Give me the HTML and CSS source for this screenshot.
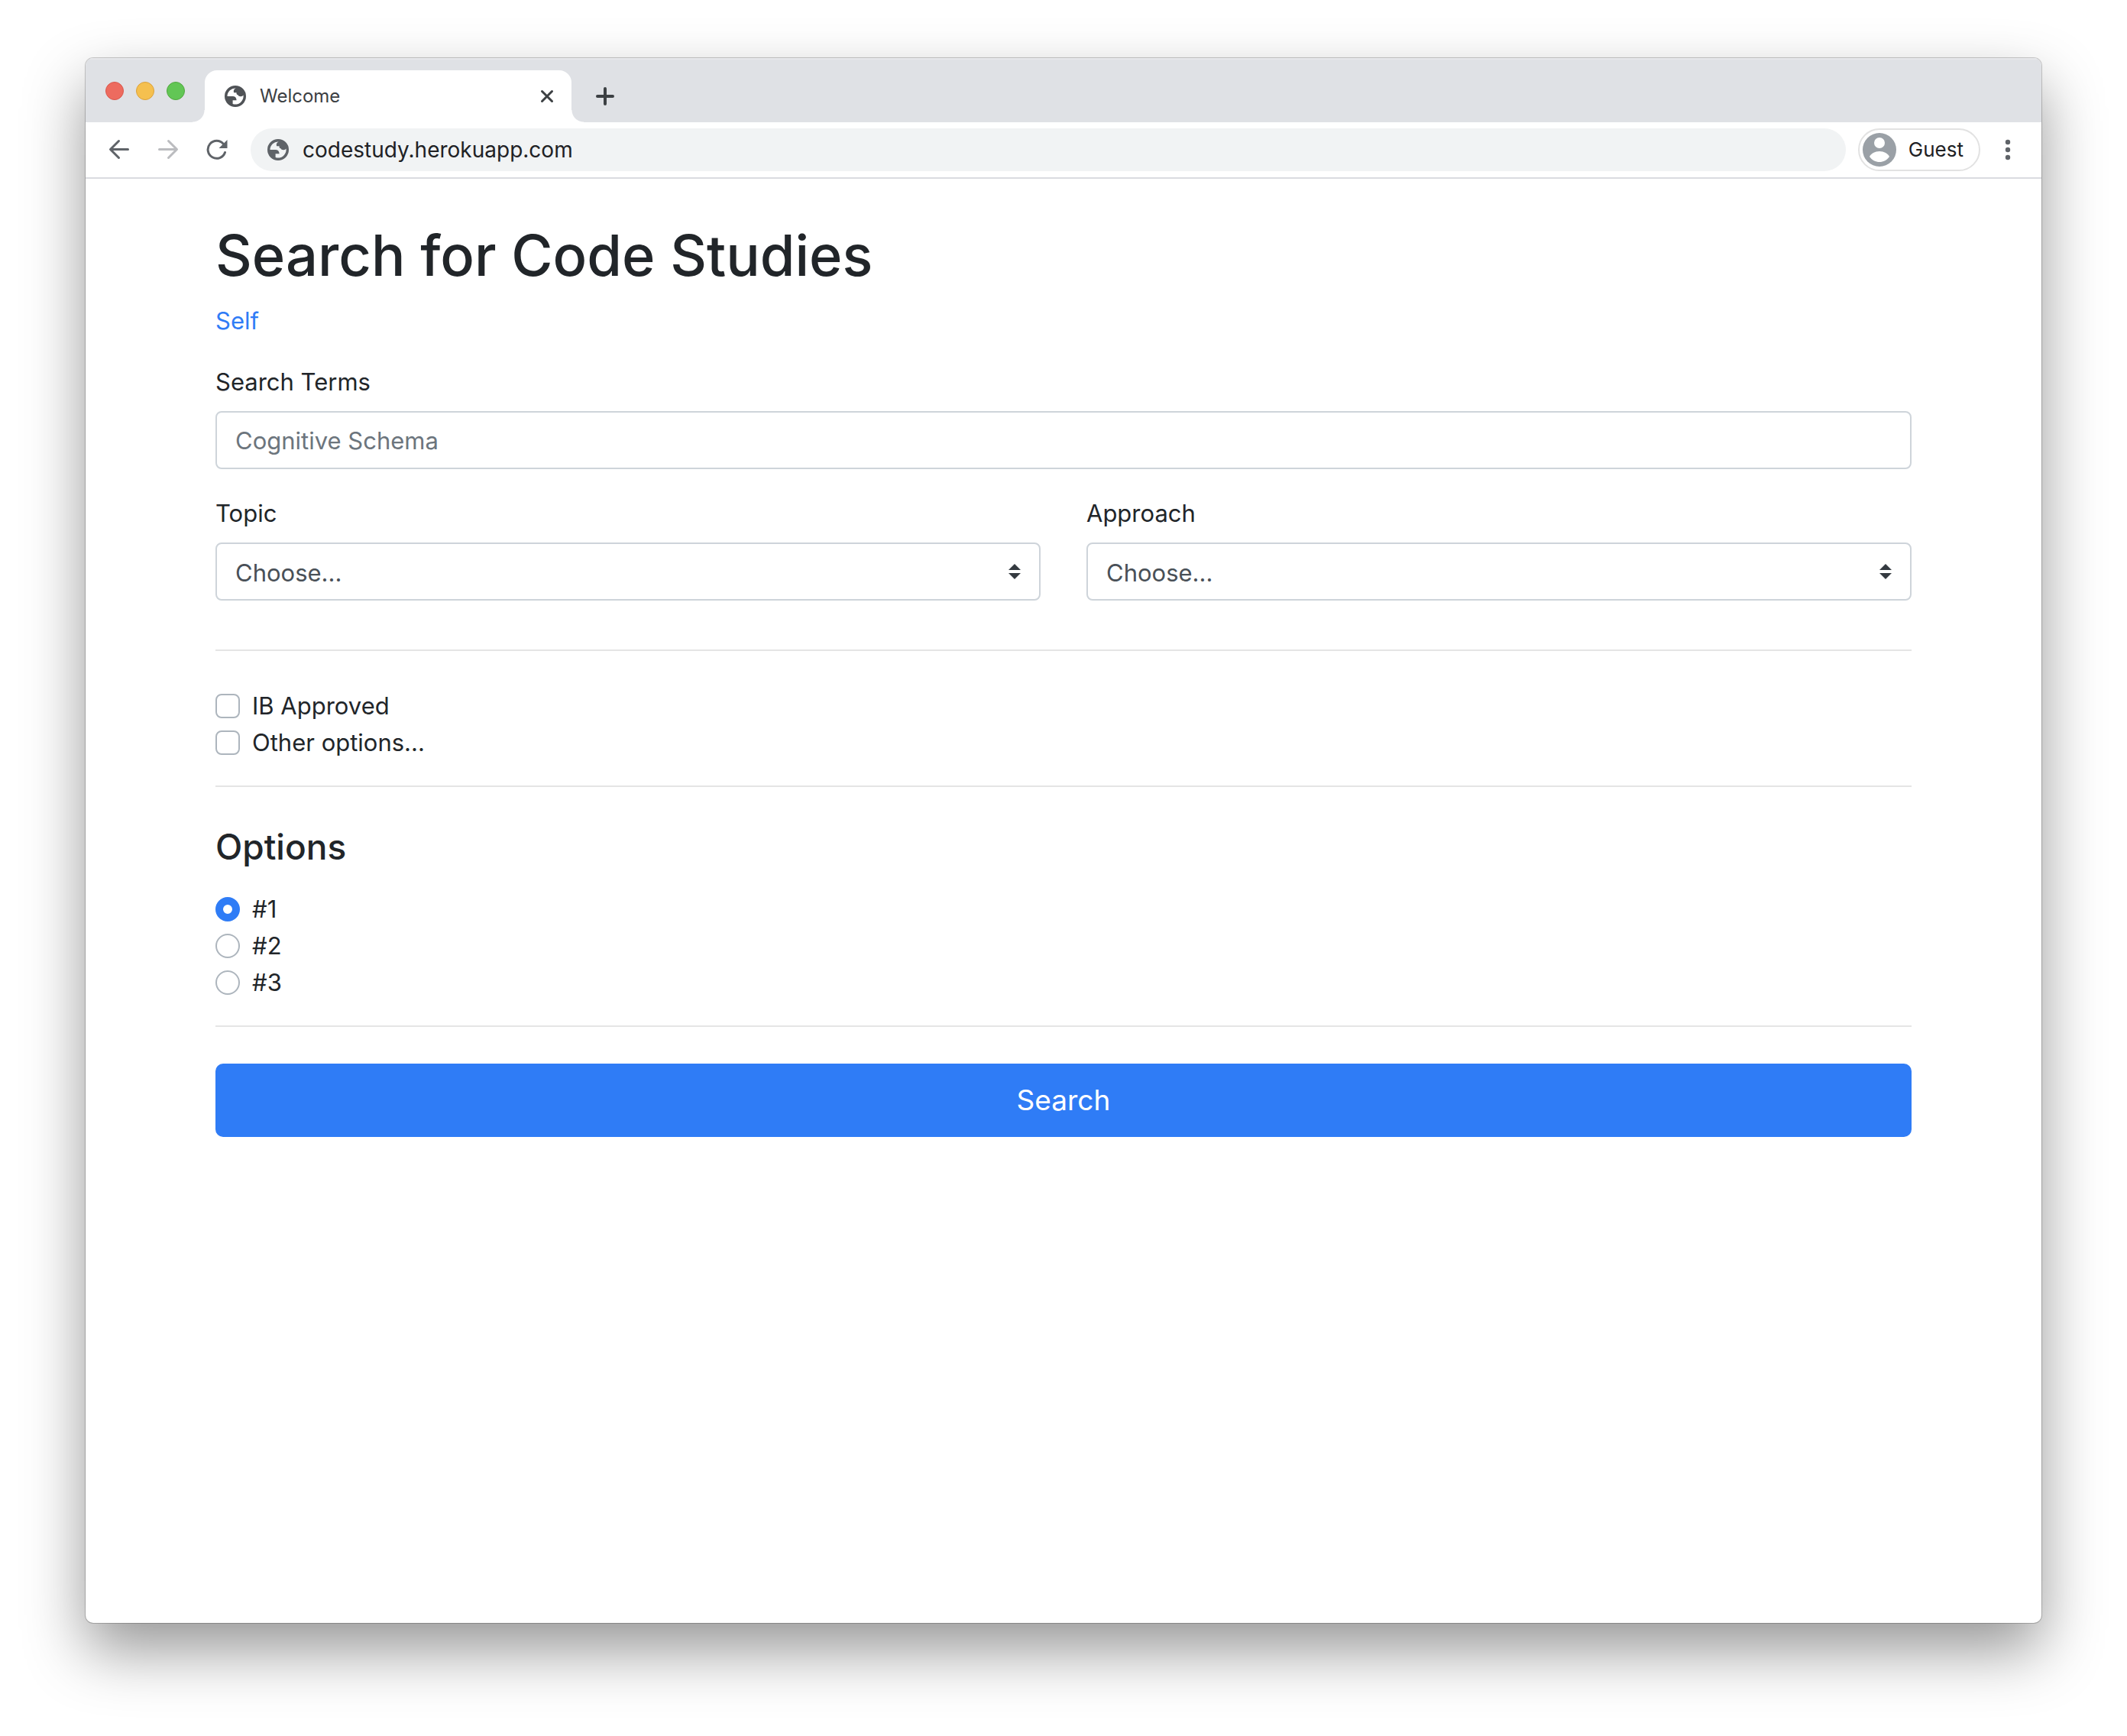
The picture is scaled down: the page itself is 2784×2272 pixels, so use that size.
FILE: index.html
```html
<!DOCTYPE html>
<html lang="en">
<head>
<meta charset="utf-8">
<meta name="viewport" content="width=device-width, initial-scale=1">
<title>Welcome</title>
<link rel="stylesheet" href="styles.css">
</head>
<body>
<svg class="sprite" aria-hidden="true">
  <symbol id="globe" viewBox="0 0 28 28">
    <path fill="currentColor" fill-rule="evenodd" d="M14 0a14 14 0 1 0 0 28a14 14 0 0 0 0-28zM14.8 3.6A10.5 10.5 0 0 0 3.5 14H10.5C13.6 14 15.6 15.8 15.6 19.3H10.6V24A10.6 10.6 0 0 0 24.5 12.6C23.6 14 22.4 14.3 21 14.2C19 14 18 13.4 17.4 12.2C16 12 15.4 11 15.6 9.3H12.2C11 6.2 12.6 4.5 14.8 3.6z"/>
  </symbol>
</svg>
<div class="window">
  <div class="tab-strip">
    <div class="lights">
      <button class="light light-close" type="button" aria-label="Close window"></button>
      <button class="light light-minimize" type="button" aria-label="Minimize window"></button>
      <button class="light light-zoom" type="button" aria-label="Zoom window"></button>
    </div>
    <div class="tab">
      <svg class="tab-icon" aria-hidden="true"><use href="#globe"/></svg>
      <span class="tab-title">Welcome</span>
      <button class="tab-close" type="button" aria-label="Close tab">
        <svg width="20" height="20" viewBox="0 0 20 20" fill="none" stroke="currentColor" stroke-width="3" stroke-linecap="round"><path d="M3.5 3.5l13 13M16.5 3.5l-13 13"/></svg>
      </button>
    </div>
    <button class="new-tab" type="button" aria-label="New tab">
      <svg width="24" height="24" viewBox="0 0 24 24" fill="none" stroke="currentColor" stroke-width="4" stroke-linecap="round"><path d="M12 2v20M2 12h20"/></svg>
    </button>
  </div>

  <div class="toolbar">
    <div class="nav">
      <button class="nav-button" type="button" aria-label="Back">
        <svg width="28" height="28" viewBox="0 0 28 28" fill="none" stroke="currentColor" stroke-width="3" stroke-linecap="round" stroke-linejoin="round"><path d="M25.500 13.500H3M13.500 2.500L2.500 13.500L13.500 24.500"/></svg>
      </button>
      <button class="nav-button" type="button" aria-label="Forward" disabled>
        <svg width="28" height="28" viewBox="0 0 28 28" fill="none" stroke="currentColor" stroke-width="3" stroke-linecap="round" stroke-linejoin="round"><path d="M2.500 13.500H25M14.500 2.500L25.500 13.500L14.500 24.500"/></svg>
      </button>
      <button class="nav-button" type="button" aria-label="Reload">
        <svg width="28" height="28" viewBox="0 0 28 28" fill="none" stroke="currentColor" stroke-width="3" stroke-linecap="round"><path d="M24.500 17.500A11.500 11.500 0 1 1 22.500 6.500"/><path d="M27.500 1V12H16.500z" fill="currentColor" stroke="none"/></svg>
      </button>
    </div>
    <label class="address">
      <svg class="address-icon" aria-hidden="true"><use href="#globe"/></svg>
      <input class="address-input" type="text" aria-label="Address" value="codestudy.herokuapp.com">
    </label>
    <button class="profile" type="button">
      <svg width="44" height="44" viewBox="0 0 44 44" aria-hidden="true"><circle cx="22" cy="22" r="22" fill="#9aa0a6"/><circle cx="22" cy="13" r="7" fill="#fff"/><path d="M9 31C11 27 16 24 22 24S33 27 35 31C32 35.500 27 38 22 38S12 35.500 9 31z" fill="#fff"/></svg>
      <span>Guest</span>
    </button>
    <button class="menu" type="button" aria-label="Menu">
      <svg width="8" height="28" viewBox="0 0 8 28" fill="currentColor"><circle cx="4" cy="4" r="3.200"/><circle cx="4" cy="14" r="3.200"/><circle cx="4" cy="24" r="3.200"/></svg>
    </button>
  </div>

  <main class="page">
    <h1 class="title">Search for Code Studies</h1>
    <a class="self-link" href="#">Self</a>
    <form class="search-form">
      <div class="field">
        <label for="terms">Search Terms</label>
        <input class="control" id="terms" type="text" placeholder="Cognitive Schema">
      </div>
      <div class="field-row">
        <div class="field">
          <label for="topic">Topic</label>
          <select class="control select" id="topic"><option>Choose...</option></select>
        </div>
        <div class="field">
          <label for="approach">Approach</label>
          <select class="control select" id="approach"><option>Choose...</option></select>
        </div>
      </div>
      <hr class="rule rule-wide">
      <div class="checks">
        <label class="check"><input class="box" type="checkbox">IB Approved</label>
        <label class="check"><input class="box" type="checkbox">Other options...</label>
      </div>
      <hr class="rule">
      <h2 class="subtitle" id="options-title">Options</h2>
      <div class="checks" role="radiogroup" aria-labelledby="options-title">
        <label class="check"><input class="box radio" type="radio" name="option" checked>#1</label>
        <label class="check"><input class="box radio" type="radio" name="option">#2</label>
        <label class="check"><input class="box radio" type="radio" name="option">#3</label>
      </div>
      <hr class="rule">
      <button class="submit" type="submit">Search</button>
    </form>
  </main>
</div>
</body>
</html>
```
FILE: styles.css
```css
*,
*::before,
*::after {
  box-sizing: border-box;
}

body {
  display: flex;
  flex-direction: column;
  min-height: 100vh;
  margin: 0;
  padding: 76px 112px 148px;
  background: #fff;
  color: #212529;
  font-family: Inter, "Liberation Sans", sans-serif;
  font-size: 31px;
  line-height: 48px;
}

button,
input,
select {
  margin: 0;
  font: inherit;
  color: inherit;
}

button {
  display: flex;
  align-items: center;
  justify-content: center;
  padding: 0;
  border: 0;
  background: none;
}

svg {
  display: block;
  flex: none;
}

.sprite {
  position: absolute;
  width: 0;
  height: 0;
}

/* Window */

.window {
  display: flex;
  flex: 1;
  flex-direction: column;
  overflow: hidden;
  border-radius: 10px;
  background: #fff;
  box-shadow: 0 0 0 1px rgba(0, 0, 0, 0.2), 0 36px 80px rgba(0, 0, 0, 0.41);
}

.tab-strip {
  display: flex;
  align-items: center;
  height: 84px;
  padding-left: 26px;
  border-top: 2px solid #e6e7ea;
  background: #dfe1e5;
  color: #3c4043;
}

.lights {
  display: flex;
  gap: 16px;
  margin-right: 26px;
}

.light {
  width: 24px;
  height: 24px;
  border: 1px solid;
  border-radius: 50%;
}

.light-close {
  border-color: #d9574c;
  background: #ed6b5f;
}

.light-minimize {
  border-color: #dba13b;
  background: #f5c04f;
}

.light-zoom {
  border-color: #51a73f;
  background: #62c655;
}

.tab {
  position: relative;
  display: flex;
  align-items: center;
  align-self: flex-end;
  gap: 18px;
  width: 480px;
  height: 68px;
  padding: 0 22px 0 26px;
  border-radius: 16px 16px 0 0;
  background: #fff;
  font-size: 24px;
}

/* Flared feet where the tab meets the toolbar */
.tab::before,
.tab::after {
  content: "";
  position: absolute;
  bottom: 0;
  width: 16px;
  height: 16px;
}

.tab::before {
  right: 100%;
  background: radial-gradient(circle at 0 0, transparent 15px, #fff 16px);
}

.tab::after {
  left: 100%;
  background: radial-gradient(circle at 100% 0, transparent 15px, #fff 16px);
}

.tab-icon {
  width: 28px;
  height: 28px;
  color: #505357;
}

.tab-title {
  flex: 1;
}

.new-tab {
  width: 56px;
  height: 56px;
  margin: 14px 0 0 16px;
}

.toolbar {
  display: flex;
  align-items: center;
  height: 74px;
  padding: 0 20px 0 12px;
  border-bottom: 2px solid #dadbe0;
  color: #5f6368;
}

.nav {
  display: flex;
  margin-right: 12px;
}

.nav-button {
  width: 64px;
  height: 56px;
}

.nav-button:disabled {
  color: #bbbcbf;
}

.address {
  display: flex;
  flex: 1;
  align-items: center;
  gap: 18px;
  height: 56px;
  padding: 0 22px;
  border-radius: 28px;
  background: #f1f3f4;
}

.address-icon {
  width: 28px;
  height: 28px;
}

.address-input {
  flex: 1;
  min-width: 0;
  padding: 0;
  border: 0;
  outline: 0;
  background: none;
  color: #202124;
  font-size: 28px;
}

.profile {
  gap: 16px;
  height: 56px;
  margin: 0 12px 0 16px;
  padding: 0 20px 0 4px;
  border: 2px solid #e2e2e2;
  border-radius: 28px;
  color: #202124;
  font-size: 26px;
}

.menu {
  width: 48px;
  height: 56px;
}

/* Page */

.page {
  width: 100%;
  max-width: 2280px;
  margin: 0 auto;
  padding: 52px 30px;
}

.title {
  margin: 0 0 14px;
  font-size: 74px;
  font-weight: 500;
  line-height: 96px;
}

.self-link {
  color: #2f7cf6;
  text-decoration: none;
}

.search-form {
  margin-top: 32px;
}

.field {
  display: flex;
  flex: 1;
  flex-direction: column;
  gap: 14px;
  margin-bottom: 34px;
}

.field-row {
  display: flex;
  gap: 60px;
}

.control {
  width: 100%;
  height: 76px;
  padding: 12px 24px;
  border: 2px solid #ced4da;
  border-radius: 8px;
  background: #fff;
  color: #495057;
}

.control::placeholder {
  color: #6c757d;
  opacity: 1;
}

.select {
  padding: 14px 24px 10px;
  appearance: none;
  background: #fff url("data:image/svg+xml,%3Csvg xmlns='http://www.w3.org/2000/svg' viewBox='0 0 4 5'%3E%3Cpath fill='%23343a40' d='M2 0L0 2h4zm0 5L0 3h4z'/%3E%3C/svg%3E") no-repeat right 24px center / 16px 20px;
}

.rule {
  height: 2px;
  margin: 32px 0 48px;
  border: 0;
  background: #e5e5e5;
}

.rule-wide {
  margin-top: 30px;
}

.checks {
  display: flex;
  flex-direction: column;
  align-items: flex-start;
}

.check {
  display: flex;
  align-items: center;
  gap: 16px;
}

.box {
  appearance: none;
  width: 32px;
  height: 32px;
  border: 2px solid #adb5bd;
  border-radius: 8px;
  background: #fff;
}

.radio {
  border-radius: 50%;
}

.radio:checked {
  border: 10px solid #2f7cf6;
}

.subtitle {
  margin: 0 0 28px;
  font-size: 46px;
  font-weight: 500;
  line-height: 60px;
}

.submit {
  width: 100%;
  height: 96px;
  border-radius: 10px;
  background: #2f7cf6;
  color: #fff;
  font-size: 37px;
}
```
